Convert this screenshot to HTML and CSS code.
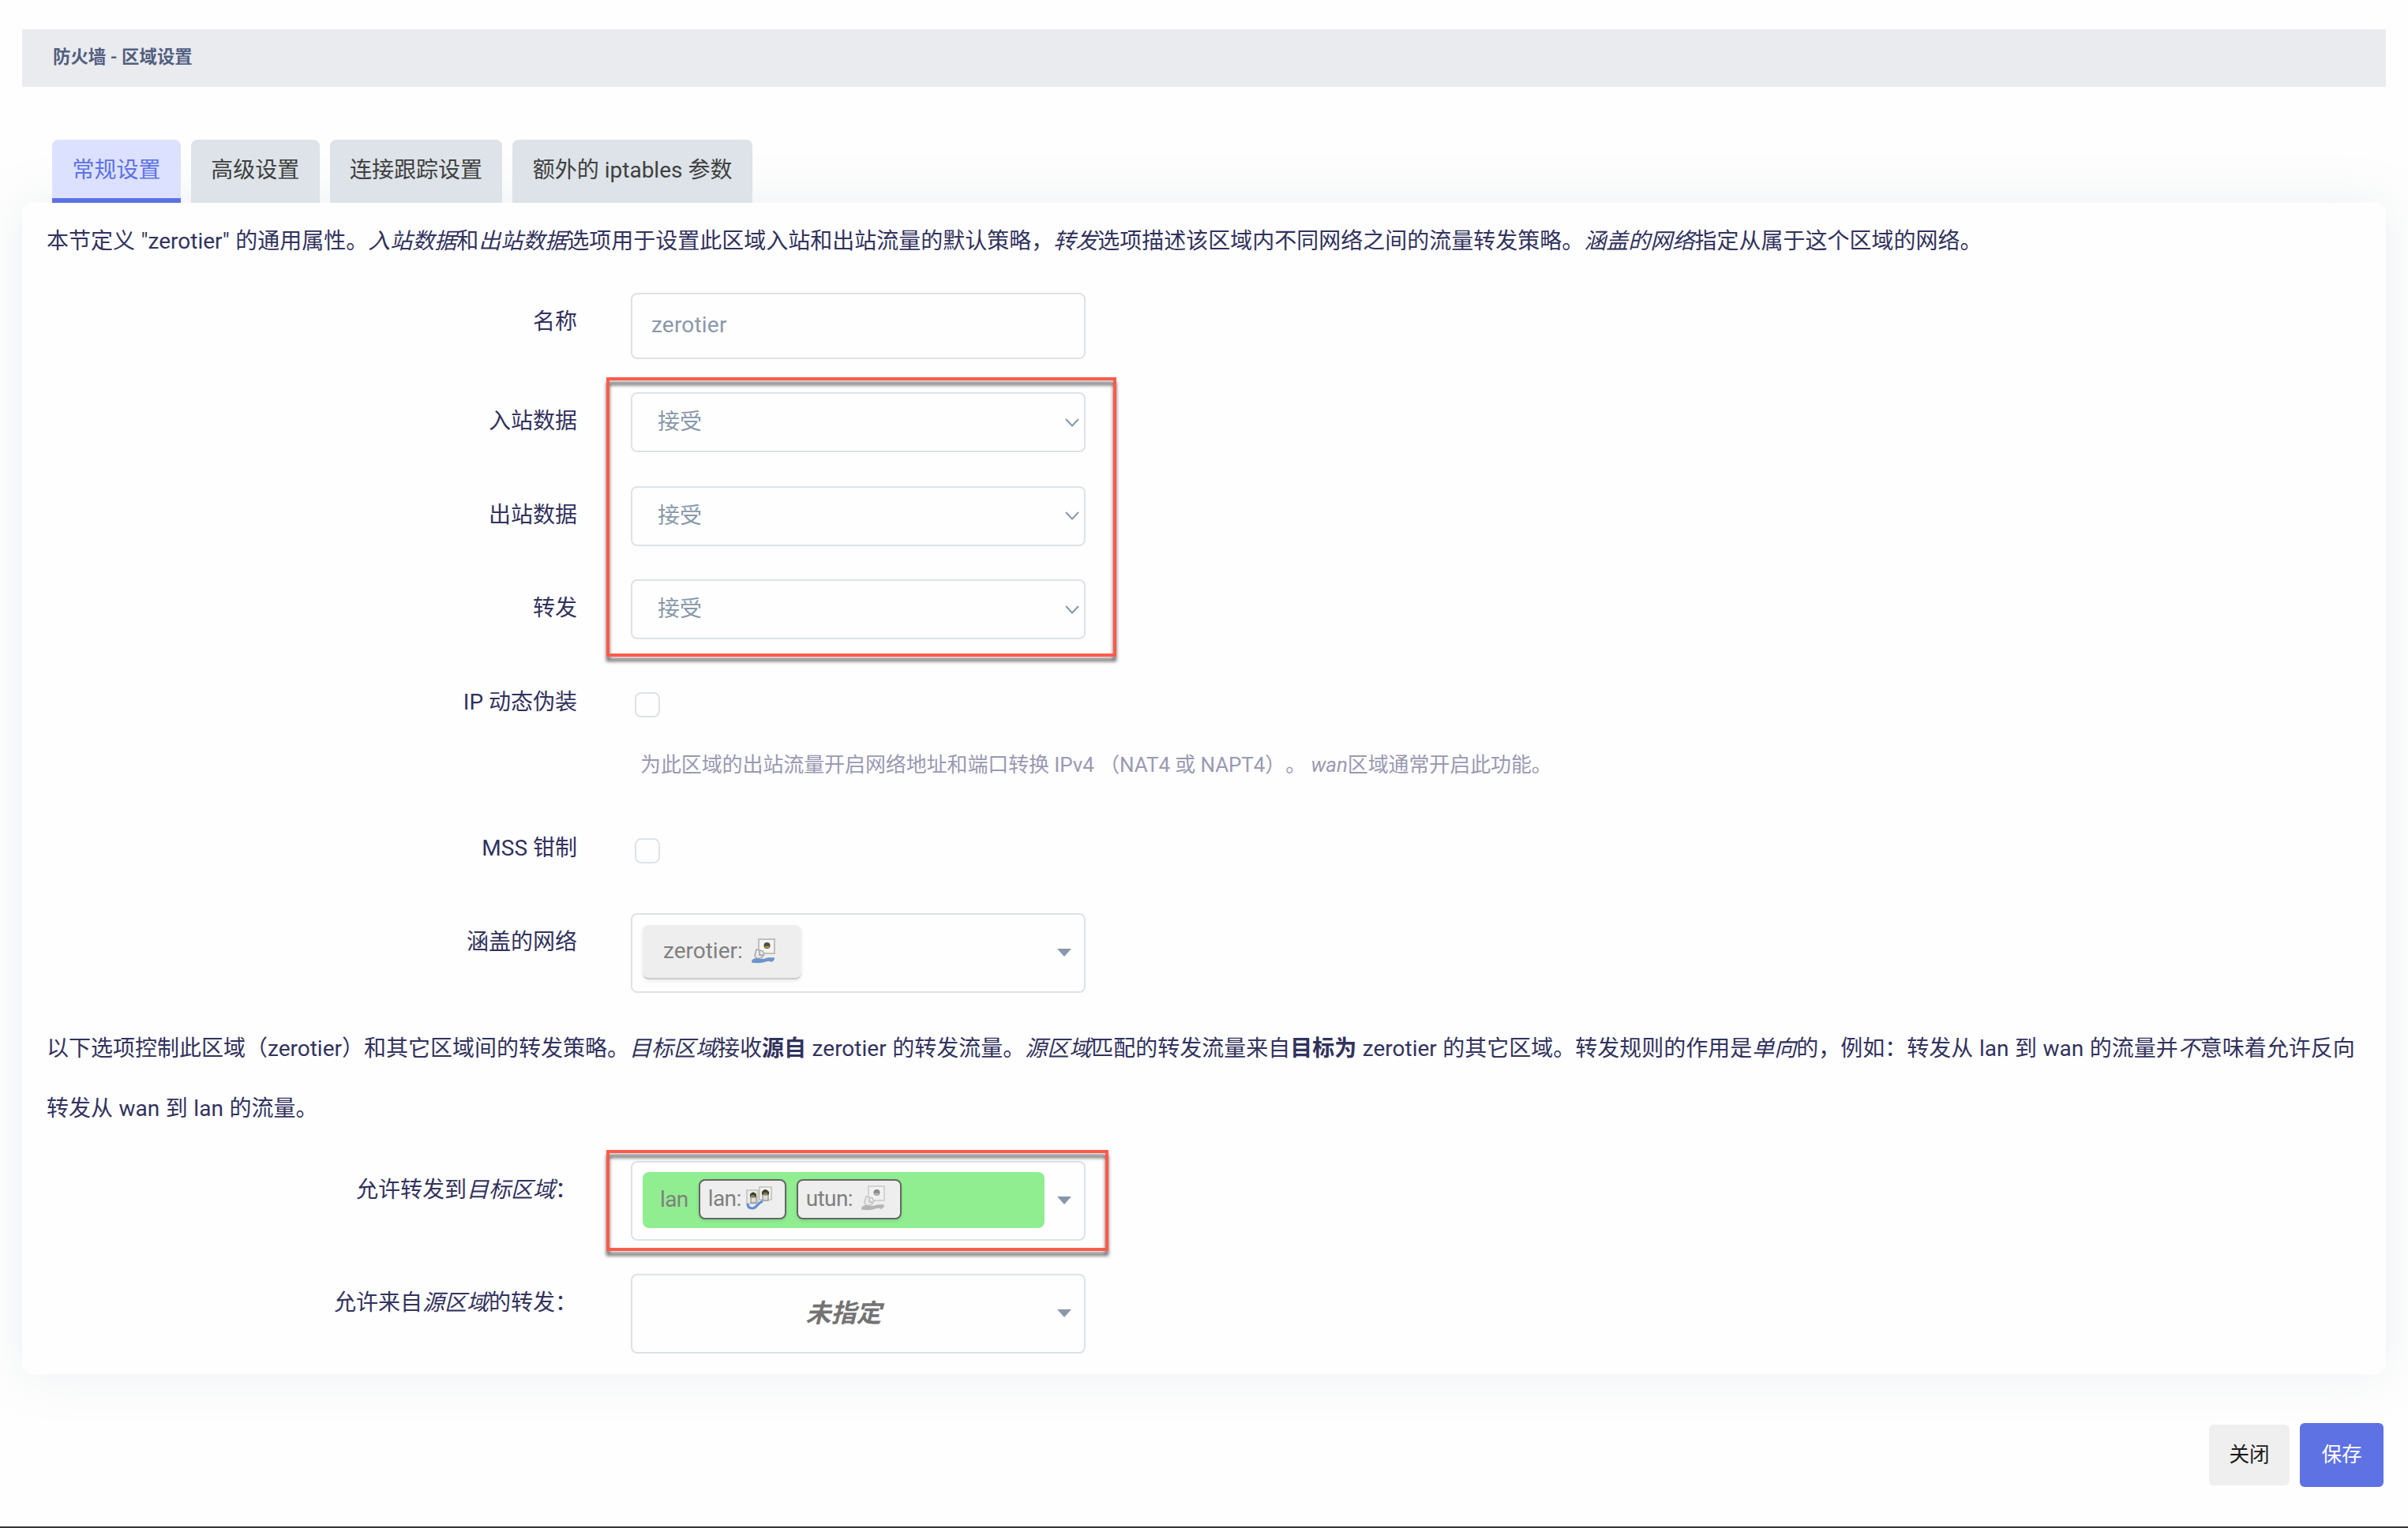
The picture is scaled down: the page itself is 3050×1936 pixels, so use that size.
FILE: index.html
```html
<!DOCTYPE html>
<html lang="zh-CN">

<head>
    <meta charset="UTF-8">
    <meta name="viewport" content="width=device-width, initial-scale=1.0">
    <title>防火墙 - 区域设置</title>
    <link rel="stylesheet" href="styles.css">
</head>

<body>
    <!-- shared icons -->
    <svg width="0" height="0" class="defs">
        <symbol id="port" viewBox="0 0 30 32">
            <path d="M9 1H29V19H9Z" fill="#f4f4f1" stroke="#c0c0bc" stroke-width="2" />
            <circle cx="19.5" cy="9" r="4" fill="#4e4c45" />
            <path d="M17 11h5" stroke="#b49a22" stroke-width="2.4" />
            <path d="M6 14l4 1 4 1 2 4-3 4-6 2-3-4Z" fill="#ececea" stroke="#aaa" stroke-width="1.6" />
            <path d="M10 16v5h4" fill="none" stroke="#999" stroke-width="1.4" />
            <path d="M1 28q3-3 7-2q6 2 13-1h7q1 2-3 4q-3-2-8 0t-16 1Z" fill="#6c95cc" stroke="#6c95cc" stroke-width="1.6" />
        </symbol>
        <symbol id="bridge" viewBox="0 0 33 30">
            <path d="M1 5H15V22H1Z" fill="#ececea" stroke="#c2c2be" stroke-width="1.6" />
            <path d="M17 1H32V17H17Z" fill="#f4f4f1" stroke="#c0c0bc" stroke-width="1.6" />
            <path d="M5 10q4-5 8 0v4H5Z" fill="#3d3b34" />
            <path d="M20 7q4-6 9 0v4h-9Z" fill="#3d3b34" />
            <path d="M6 12h5M22 9h5" stroke="#a8922c" stroke-width="1.6" />
            <path d="M6 14h7v7H6ZM21 11h7v7h-7Z" fill="#dededc" stroke="#999" stroke-width="1.4" />
            <path d="M2 22q0 6 6 6c6 0 6-7 13-9" fill="none" stroke="#5f90d2" stroke-width="3.2" />
        </symbol>
    </svg>

    <h4>防火墙 - 区域设置</h4>

    <ul class="tabs">
        <li class="active">常规设置</li>
        <li>高级设置</li>
        <li>连接跟踪设置</li>
        <li>额外的 iptables 参数</li>
    </ul>

    <div class="panel">
        <p class="descr">本节定义 "zerotier" 的通用属性。<em>入站数据</em>和<em>出站数据</em>选项用于设置此区域入站和出站流量的默认策略，<em>转发</em>选项描述该区域内不同网络之间的流量转发策略。<em>涵盖的网络</em>指定从属于这个区域的网络。</p>

        <div class="row">
            <label>名称</label>
            <div class="box input">zerotier</div>
        </div>

        <div class="group policies">
            <div class="row">
                <label>入站数据</label>
                <div class="box select">接受<svg class="chevron" viewBox="0 0 18 11"><path d="M1 1L9 9.5L17 1" /></svg></div>
            </div>
            <div class="row">
                <label>出站数据</label>
                <div class="box select">接受<svg class="chevron" viewBox="0 0 18 11"><path d="M1 1L9 9.5L17 1" /></svg></div>
            </div>
            <div class="row">
                <label>转发</label>
                <div class="box select">接受<svg class="chevron" viewBox="0 0 18 11"><path d="M1 1L9 9.5L17 1" /></svg></div>
            </div>
            <div class="mark"></div>
        </div>

        <div class="row masq">
            <label>IP 动态伪装</label>
            <div>
                <div class="checkbox"></div>
                <div class="help">为此区域的出站流量开启网络地址和端口转换 IPv4 （NAT4 或 NAPT4）。 <em>wan</em>区域通常开启此功能。</div>
            </div>
        </div>

        <div class="row mss">
            <label>MSS 钳制</label>
            <div class="checkbox"></div>
        </div>

        <div class="row">
            <label>涵盖的网络</label>
            <div class="box dropdown">
                <div class="values">
                    <span class="tag">zerotier: <svg class="icon"><use href="#port" /></svg></span>
                </div>
                <i class="arrow"></i>
            </div>
        </div>

        <p class="descr forward">以下选项控制此区域（zerotier）和其它区域间的转发策略。<em>目标区域</em>接收<b>源自</b> zerotier 的转发流量。<em>源区域</em>匹配的转发流量来自<b>目标为</b> zerotier 的其它区域。转发规则的作用是<em>单向</em>的，例如：转发从 lan 到 wan 的流量并<em>不</em>意味着允许反向<br>转发从 wan 到 lan 的流量。</p>

        <div class="group targets">
            <div class="row">
                <label>允许转发到<em>目标区域</em>：</label>
                <div class="box dropdown">
                    <div class="values zone">
                        lan
                        <span class="badge">lan: <svg class="icon wide"><use href="#bridge" /></svg></span>
                        <span class="badge">utun: <svg class="icon off"><use href="#port" /></svg></span>
                    </div>
                    <i class="arrow"></i>
                </div>
            </div>
            <div class="mark"></div>
        </div>

        <div class="row">
            <label>允许来自<em>源区域</em>的转发：</label>
            <div class="box dropdown">
                <div class="values none"><em>未指定</em></div>
                <i class="arrow"></i>
            </div>
        </div>
    </div>

    <div class="actions">
        <button>关闭</button>
        <button class="save">保存</button>
    </div>
</body>

</html>
```

FILE: styles.css
```css
* {
    box-sizing: border-box;
}

body {
    margin: 0;
    padding: 37px 28px 0;
    height: 1936px;
    overflow: hidden;
    border-bottom: 2px solid #363636;
    background: #fefefe;
    color: #32325d;
    font-family: Roboto, "Noto Sans CJK SC", sans-serif;
    font-size: 28px;
    text-spacing-trim: space-all;
}

.defs {
    position: absolute;
}

h4 {
    height: 73px;
    margin: 0 0 67px;
    padding: 0 39px;
    background: #eaebef;
    color: #525f7f;
    font-size: 22.4px;
    line-height: 70px;
}

.tabs {
    display: flex;
    gap: 13px;
    margin: 0;
    padding: 0 38px;
    list-style: none;
}

.tabs li {
    height: 80px;
    padding: 0 25.4px;
    border-radius: 8px 8px 0 0;
    background: #dde3e8;
    color: #404040;
    line-height: 77px;
    white-space: nowrap;
}

.tabs .active {
    border-bottom: 6px solid #5e72e4;
    background: #dce1ff;
    color: #5e72e4;
}

.panel {
    height: 1484px;
    padding: 11px 31px 0;
    border-radius: 12px;
    background: #fefefe;
    box-shadow: 0 0 64px rgba(136, 152, 170, 0.15);
}

.descr {
    margin: 0 0 27px;
    line-height: 76px;
    word-spacing: 0.6px;
    white-space: nowrap;
}

.forward {
    margin-top: -9px;
    margin-bottom: 28px;
}

.row {
    display: flex;
    align-items: flex-start;
    gap: 68px;
    margin-bottom: 42px;
}

.row label {
    width: 672px;
    text-align: right;
    line-height: 74px;
}

.box {
    display: flex;
    align-items: center;
    width: 576px;
    border: 2px solid #dee2e6;
    border-radius: 8px;
    color: #8898aa;
}

.input {
    height: 84px;
    padding: 0 24px 3px;
    letter-spacing: 0.2px;
}

.select {
    justify-content: space-between;
    height: 76px;
    margin-bottom: 0.6px;
    padding: 0 6px 6px 32px;
}

.chevron {
    width: 18px;
    height: 11px;
    margin-top: 6px;
    fill: none;
    stroke: #8898aa;
    stroke-width: 2;
}

.group {
    position: relative;
}

/* red highlight frames over the fields */
.mark {
    position: absolute;
    border: 4px solid #ff5a4b;
    filter: drop-shadow(0 6px 2px rgba(0, 0, 0, 0.6));
}

.policies .mark {
    top: -19px;
    left: 709px;
    width: 646px;
    height: 354px;
}

.targets .mark {
    top: -14px;
    left: 709px;
    width: 636px;
    height: 128px;
}

.checkbox {
    width: 32px;
    height: 32px;
    margin: 24px 0 0 5px;
    border: 2px solid #dee2e6;
    border-radius: 8px;
}

.help {
    margin: 40px 0 0 12px;
    color: #9a99b2;
    font-size: 26px;
    letter-spacing: -0.1px;
    line-height: 40px;
    white-space: nowrap;
}

.masq {
    height: 143px;
}

.mss {
    height: 77px;
}

.dropdown {
    height: 101px;
    padding: 0 16px 1px 13px;
}

.values {
    flex: 1;
    display: flex;
    align-items: center;
    margin-right: 16px;
    color: #808080;
}

.arrow {
    border: 9px solid transparent;
    border-top: 10px solid #8898aa;
    border-bottom: 0;
}

.tag {
    display: flex;
    align-items: center;
    justify-content: space-between;
    width: 201px;
    height: 69px;
    padding: 0 33px 2px 26px;
    border-bottom: 2px solid #ccc;
    border-radius: 8px;
    background: #eee;
    box-shadow: 0 2px 4px rgba(0, 0, 0, 0.08);
}

.icon {
    width: 30px;
    height: 32px;
}

.icon.wide {
    width: 33px;
    height: 30px;
}

.icon.off {
    filter: grayscale(1);
    opacity: 0.6;
}

.zone {
    gap: 13px;
    height: 71px;
    padding: 0 0 2px 22px;
    border-radius: 8px;
    background: #90ee90;
    letter-spacing: -0.6px;
}

.badge {
    display: flex;
    align-items: center;
    justify-content: space-between;
    width: 111px;
    height: 51px;
    padding: 0 16px 3px 10px;
    border: 2px solid #666;
    border-radius: 8px;
    background: #eee;
    box-shadow: 0 2px 4px rgba(0, 0, 0, 0.1);
}

.badge + .badge {
    width: 133px;
    padding-right: 19px;
}

.none {
    justify-content: center;
    padding-bottom: 6px;
    color: #737373;
    font-size: 32px;
    font-weight: bold;
}

.actions {
    display: flex;
    align-items: center;
    justify-content: flex-end;
    gap: 13px;
    margin-top: 62px;
    padding-right: 3px;
}

button {
    width: 102px;
    height: 77px;
    padding: 0 0 7px;
    border: 0;
    border-radius: 6px;
    background: #efefef;
    color: #1a1a1a;
    font: 25.6px Roboto, "Noto Sans CJK SC", sans-serif;
}

.save {
    width: 106px;
    height: 81px;
    background: #5e72e4;
    color: #fff;
}
```
